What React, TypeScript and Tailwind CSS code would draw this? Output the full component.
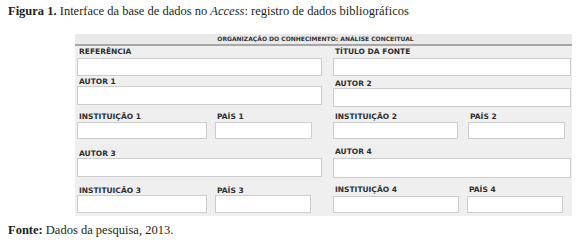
import React from "react";

const labelCls =
  "block h-[8px] leading-[8px] text-[7.5px] font-bold text-[#2e2e2e] pl-[2px] whitespace-nowrap";
const inputCls = "block bg-white border border-[#cdcdcd]";

function Field({
  label,
  mt,
  gap,
  h,
  w,
}: {
  label: string;
  mt: string;
  gap: string;
  h: string;
  w?: string;
}) {
  return (
    <div className={`${mt} ${w ?? ""}`}>
      <span className={labelCls}>{label}</span>
      <div className={`${inputCls} ${gap} ${h}`} />
    </div>
  );
}

export default function App() {
  return (
    <div
      className="w-[580px] h-[240px] bg-white overflow-hidden"
      style={{ fontFamily: '"DejaVu Sans", Verdana, sans-serif' }}
    >
      <p
        className="pl-[8px] pt-[3px] text-[12.5px] leading-[16px] text-[#231f20] whitespace-nowrap"
        style={{ fontFamily: '"Liberation Serif", serif' }}
      >
        <span className="font-bold">Figura 1.</span> Interface da base de dados no{" "}
        <i>Access</i>: registro de dados bibliográficos
      </p>

      <div className="ml-[75px] mt-[15px] w-[497px] h-[182px] bg-[#efefef]">
        <div className="h-[10px] bg-[#e9e9e9] text-[6px] leading-[10px] font-bold text-[#333] text-center pr-[16px]">
          ORGANIZAÇÃO DO CONHECIMENTO: ANÁLISE CONCEITUAL
        </div>
        <div className="h-[2px] bg-[#a6a6a6]" />

        <div className="grid grid-cols-[245px_238px] gap-x-[11px] pl-[2px] pt-[2px]">
          {/* left column */}
          <div className="flex flex-col">
            <Field label="REFERÊNCIA" mt="mt-0" gap="mt-[2px]" h="h-[18px]" />
            <Field label="AUTOR 1" mt="mt-[2px]" gap="mt-0" h="h-[19px]" />
            <div className="flex gap-[8px] mt-[8px]">
              <Field label="INSTITUIÇÃO 1" mt="mt-0" gap="mt-[1px]" h="h-[17px]" w="w-[130px]" />
              <Field label="PAÍS 1" mt="mt-0" gap="mt-[1px]" h="h-[17px]" w="w-[97px]" />
            </div>
            <Field label="AUTOR 3" mt="mt-[11px]" gap="mt-0" h="h-[19px]" />
            <div className="flex gap-[8px] mt-[10px]">
              <Field label="INSTITUICÃO 3" mt="mt-0" gap="mt-0" h="h-[18px]" w="w-[130px]" />
              <Field label="PAÍS 3" mt="mt-0" gap="mt-0" h="h-[18px]" w="w-[96px]" />
            </div>
          </div>

          {/* right column */}
          <div className="flex flex-col">
            <Field label="TÍTULO DA FONTE" mt="mt-0" gap="mt-[2px]" h="h-[18px]" />
            <Field label="AUTOR 2" mt="mt-[4px]" gap="mt-0" h="h-[19px]" />
            <div className="flex gap-[10px] mt-[6px]">
              <Field label="INSTITUIÇÃO 2" mt="mt-0" gap="mt-[1px]" h="h-[17px]" w="w-[125px]" />
              <Field label="PAÍS 2" mt="mt-0" gap="mt-[1px]" h="h-[17px]" w="w-[97px]" />
            </div>
            <Field label="AUTOR 4" mt="mt-[9px]" gap="mt-[2px]" h="h-[20px]" />
            <div className="flex gap-[8px] mt-[8px]">
              <Field label="INSTITUIÇÃO 4" mt="mt-0" gap="mt-[2px]" h="h-[17px]" w="w-[126px]" />
              <Field label="PAÍS 4" mt="mt-0" gap="mt-[2px]" h="h-[17px]" w="w-[96px]" />
            </div>
          </div>
        </div>
      </div>

      <p
        className="pl-[8px] mt-[6px] text-[12.5px] leading-[16px] text-[#231f20]"
        style={{ fontFamily: '"Liberation Serif", serif' }}
      >
        <span className="font-bold">Fonte:</span> Dados da pesquisa, 2013.
      </p>
    </div>
  );
}
